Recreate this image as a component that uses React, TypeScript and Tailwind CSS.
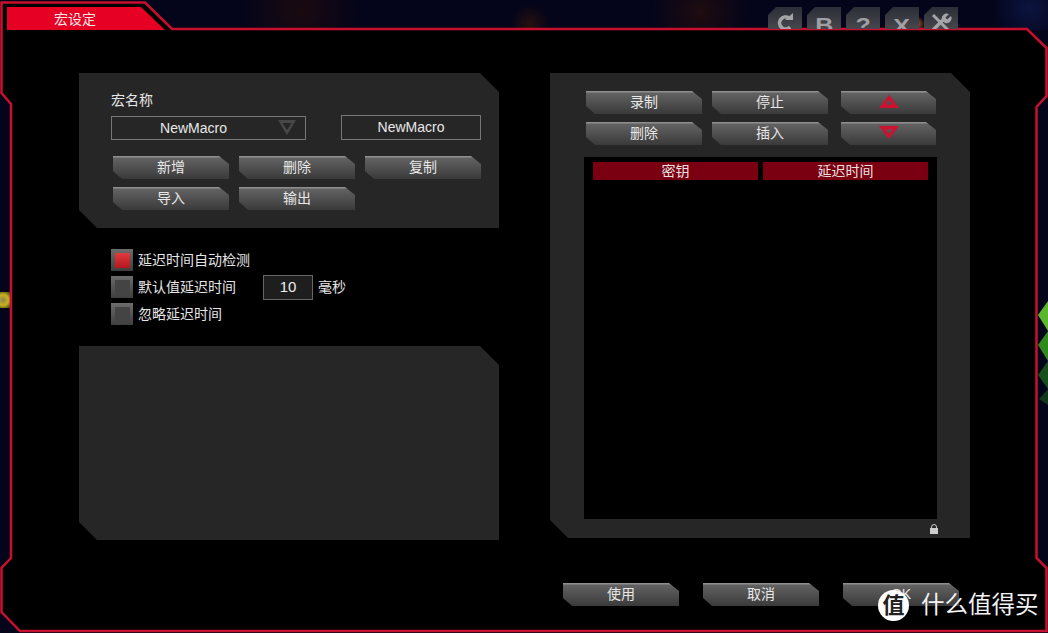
const cjk = "font-['Liberation_Sans','Noto_Sans_CJK_SC',sans-serif]";

function Bevel({ label, wide = true, children }: { label?: string; wide?: boolean; children?: React.ReactNode }) {
  return (
    <button
      type="button"
      className={`flex h-[23px] items-center justify-center bg-[linear-gradient(#8f8f8f_0,#8f8f8f_1px,#626262_2px,#3a3a3a_100%)] pb-[2px] text-[14px] leading-none text-[#e8e8e8] [clip-path:polygon(0_0,calc(100%-10px)_0,100%_8px,100%_100%,9px_100%,0_calc(100%-8px))] ${
        wide ? "w-[116px]" : "w-[95px]"
      }`}
    >
      {label}
      {children}
    </button>
  );
}

function Check({ on, label }: { on?: boolean; label: string }) {
  return (
    <div className="flex h-[22px] items-center gap-[5px]">
      <span className="flex size-[22px] items-center justify-center bg-[linear-gradient(#6c6c6c,#3e3e3e)]">
        <span className={`size-[15px] ${on ? "bg-[linear-gradient(#e23a3e,#b3171d)]" : "bg-[#444444]"}`} />
      </span>
      <span className="text-[14px] leading-none text-[#e6e6e6]">{label}</span>
    </div>
  );
}

function Tri({ down }: { down?: boolean }) {
  return (
    <svg width="22" height="15" viewBox="0 0 22 15" className="text-[#d0102f]">
      <path
        d={down ? "M1 1H21L11 14Z M7.5 4.5L11 9L14.5 4.5Z" : "M11 1L21 14H1Z M11 6L7.5 10.5H14.5Z"}
        fill="currentColor"
        fillRule="evenodd"
      />
    </svg>
  );
}

function TopIcon({ children, top }: { children: React.ReactNode; top: string }) {
  return (
    <div className={`flex h-[22px] w-[34px] items-start justify-center overflow-hidden bg-[linear-gradient(#2b2e37,#47474d)] [clip-path:polygon(8px_0,100%_0,100%_100%,0_100%,0_8px)] ${top}`}>
      {children}
    </div>
  );
}

export default function App() {
  return (
    <div className={`relative h-[633px] w-[1048px] overflow-hidden bg-[#04041a] ${cjk}`}>
      {/* game art behind the window */}
      <div className="absolute left-0 top-0 h-[30px] w-[1048px] bg-[radial-gradient(circle_at_300px_10px,#1a0a10_0,transparent_60px),radial-gradient(circle_at_530px_24px,#26100f_0,transparent_20px),radial-gradient(circle_at_700px_12px,#1e0c10_0,transparent_50px),radial-gradient(circle_at_917px_24px,#b0601c_0,transparent_8px),radial-gradient(circle_at_1030px_8px,#0c1440_0,transparent_40px)]" />
      <div className="absolute left-0 top-[292px] h-[16px] w-[10px] bg-[radial-gradient(circle_at_3px_8px,#8a8450_0,#c9b020_50%,#2a3a10_100%)]" />
      <svg width="11" height="110" viewBox="0 0 11 110" className="absolute right-0 top-[295px]">
        <path d="M11 6L1 20L11 36Z" fill="#58b82a" />
        <path d="M11 36L1 50L11 66Z" fill="#2f8a20" />
        <path d="M11 66L1 80L11 94Z" fill="#17501c" />
        <path d="M11 94L2 104L11 110Z" fill="#0f3a1a" />
      </svg>

      <svg width="1048" height="633" className="absolute left-0 top-0">
        <path
          d="M1.5 2.5H145L172 29H1027L1046.5 48V96L1036.5 107V558L1046.5 568V631H20L1.5 612V568L11 558V104L1.5 93Z"
          fill="#000"
          stroke="#c8102e"
          strokeWidth="2.5"
        />
      </svg>

      <div className="relative flex h-full flex-col">
        <header className="flex h-[30px] items-start justify-between pl-[7px] pr-[90px] pt-[7px]">
          <div className="flex h-[23px] w-[158px] items-center bg-[#e60023] pl-[47px] text-[14px] leading-none text-[#f5e6e6] [clip-path:polygon(0_0,134px_0,100%_100%,0_100%)]">
            宏设定
          </div>
          <div className="flex gap-[5px]">
            <TopIcon top="pt-[6px]">
              <svg width="20" height="17" viewBox="0 0 20 17" fill="none" stroke="#a5a5a8" strokeWidth="3.6">
                <path d="M14 5A6 6 0 1 0 15 14" />
                <path d="M10 7H18V0Z" fill="#a5a5a8" stroke="none" />
              </svg>
            </TopIcon>
            <TopIcon top="pt-[8px]">
              <span className="origin-top scale-x-125 text-[20px] font-bold leading-none text-[#a0a0a4]">B</span>
            </TopIcon>
            <TopIcon top="pt-[8px]">
              <span className="origin-top scale-x-125 text-[20px] font-bold leading-none text-[#a0a0a4]">?</span>
            </TopIcon>
            <TopIcon top="pt-[9px]">
              <span className="origin-top scale-x-125 text-[20px] font-bold leading-none text-[#a0a0a4]">X</span>
            </TopIcon>
            <TopIcon top="pt-[6px]">
              <svg width="22" height="17" viewBox="0 0 22 17" fill="none" stroke="#a5a5a8">
                <path d="M3 2L18 17" strokeWidth="3" />
                <path d="M3 17L14 6" strokeWidth="3.4" />
                <path d="M12 7A5 5 0 0 1 19 1L15.5 4.5L17 6.5L21 3A5 5 0 0 1 15 10Z" fill="#a5a5a8" stroke="none" />
              </svg>
            </TopIcon>
          </div>
        </header>

        <main className="flex gap-[51px] pl-[79px] pt-[43px]">
          <section className="flex w-[420px] flex-col">
            <div className="h-[155px] bg-[#262626] pl-[32px] pr-[18px] pt-[19px] [clip-path:polygon(0_0,401px_0,100%_19px,100%_100%,18px_100%,0_137px)]">
              <p className="h-[24px] text-[14px] leading-[16px] text-[#e6e6e6]">宏名称</p>
              <div className="flex items-start gap-[35px]">
                <div className="relative flex h-[24px] w-[195px] items-center justify-center border border-[#777] pr-[30px] text-[14px] text-[#e8e8e8]">
                  NewMacro
                  <svg width="18" height="15" viewBox="0 0 18 15" className="absolute right-[9px] top-[3px] text-[#474747]">
                    <path d="M0 0H18L9 15Z M4.5 3L9 10L13.5 3Z" fill="currentColor" fillRule="evenodd" />
                  </svg>
                </div>
                <div className="-mt-[1px] flex h-[25px] w-[140px] items-center justify-center border border-[#777] text-[14px] text-[#e8e8e8]">
                  NewMacro
                </div>
              </div>
              <div className="mt-[16px] flex w-[370px] flex-wrap gap-x-[10px] gap-y-[8px] pl-[2px]">
                <Bevel label="新增" />
                <Bevel label="删除" />
                <Bevel label="复制" />
                <Bevel label="导入" />
                <Bevel label="输出" />
              </div>
            </div>

            <div className="flex flex-col gap-[5px] pl-[32px] pt-[21px]">
              <Check on label="延迟时间自动检测" />
              <div className="flex h-[22px] items-center">
                <div className="w-[152px]">
                  <Check label="默认值延迟时间" />
                </div>
                <div className="flex h-[25px] w-[50px] shrink-0 items-center justify-center border border-[#666] bg-[#1e1e1e] text-[15px] text-[#eeeeee]">
                  10
                </div>
                <span className="ml-[5px] text-[14px] text-[#e6e6e6]">毫秒</span>
              </div>
              <Check label="忽略延迟时间" />
            </div>

            <div className="mt-[21px] h-[194px] bg-[#262626] [clip-path:polygon(0_0,401px_0,100%_19px,100%_100%,18px_100%,0_176px)]" />
          </section>

          <section className="relative h-[465px] w-[420px] bg-[#262626] pl-[36px] pt-[18px] [clip-path:polygon(0_0,401px_0,100%_19px,100%_100%,18px_100%,0_447px)]">
            <div className="flex flex-wrap gap-y-[8px]">
              <div className="mr-[10px]">
                <Bevel label="录制" />
              </div>
              <div className="mr-[13px]">
                <Bevel label="停止" />
              </div>
              <Bevel wide={false}>
                <Tri />
              </Bevel>
              <div className="mr-[10px]">
                <Bevel label="删除" />
              </div>
              <div className="mr-[13px]">
                <Bevel label="插入" />
              </div>
              <Bevel wide={false}>
                <Tri down />
              </Bevel>
            </div>
            <div className="-ml-[2px] mt-[12px] h-[362px] w-[353px] bg-black px-[9px] pt-[5px]">
              <div className="flex gap-[5px]">
                <div className="flex h-[18px] flex-1 items-center justify-center bg-[#7a0011] text-[14px] leading-none text-[#e8e0e0]">
                  密钥
                </div>
                <div className="flex h-[18px] flex-1 items-center justify-center bg-[#7a0011] text-[14px] leading-none text-[#e8e0e0]">
                  延迟时间
                </div>
              </div>
            </div>
            <svg width="8" height="10" viewBox="0 0 8 10" className="absolute left-[380px] top-[451px] text-[#cccccc]">
              <path d="M1.5 4V3A2.5 2.5 0 0 1 6.5 3V4" fill="none" stroke="currentColor" />
              <rect y="4" width="8" height="6" fill="currentColor" />
            </svg>
          </section>
        </main>

        <footer className="flex gap-[24px] pl-[563px] pt-[43px]">
          <Bevel label="使用" />
          <Bevel label="取消" />
          <Bevel label="OK" />
        </footer>
      </div>

      {/* watermark */}
      <div className="absolute left-[878px] top-[590px] flex items-center gap-[12px]">
        <span className="flex size-[31px] items-center justify-center rounded-full bg-white text-[22px] font-bold leading-none text-[#222222]">
          值
        </span>
        <span className="text-[23.5px] leading-none text-[#f2f2f2]">什么值得买</span>
      </div>
    </div>
  );
}
